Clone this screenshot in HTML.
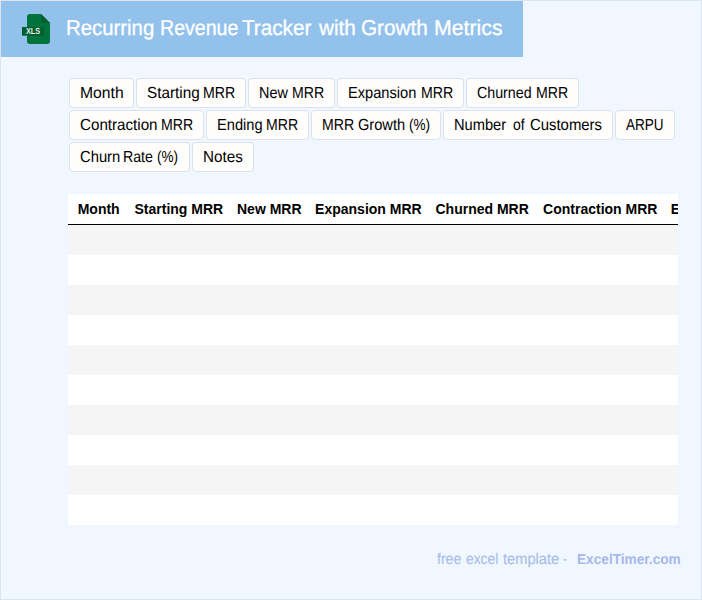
<!DOCTYPE html>
<html lang="en">
<head>
<meta charset="utf-8">
<title>Recurring Revenue Tracker with Growth Metrics</title>
<style>
html,body{margin:0;padding:0;}
body{text-rendering:geometricPrecision;width:702px;height:600px;overflow:hidden;background:#f0f7ff;font-family:"Liberation Sans",sans-serif;position:relative;}
#frame{position:absolute;left:0;top:0;width:700px;height:598px;border:1px solid #dce5ef;}
#hdr{position:absolute;left:1px;top:1px;width:522px;height:56px;background:#92c1ec;}
#icon{position:absolute;left:20px;top:12px;}
.w{position:absolute;white-space:pre;display:block;transform-origin:0 0;}
.tw{color:#fff;-webkit-text-stroke:0.3px #fff;}
.tag{position:absolute;box-sizing:border-box;height:30px;border:1px solid #d9e2ed;border-radius:4px;background:#fffefd;}
.tl .w{color:#000;}
#tbl{position:absolute;left:68px;top:194px;width:610px;height:331px;overflow:hidden;background:#fff;}
#thead{position:absolute;left:0;top:0;width:610px;height:30px;border-bottom:1px solid #000;}
.th{font-weight:bold;color:#000;text-rendering:auto;}
.row{position:absolute;left:0;width:610px;height:30px;background:#f5f5f5;}
.ff{color:#a7beea;-webkit-text-stroke:0.15px #a7beea;}
.fb{color:#a7b8ea;font-weight:bold;}
</style>
</head>
<body>
<div id="frame"></div>
<div id="hdr"></div>
<svg id="icon" width="32" height="34" viewBox="20 12 32 34">
<path d="M30 14h11l9 9v18a3 3 0 0 1-3 3H30a3 3 0 0 1-3-3V17a3 3 0 0 1 3-3z" fill="#00733c"/>
<path d="M41 14l9 9h-9z" fill="#005f30"/>
<rect x="22" y="27" width="22" height="8.7" fill="#005f30"/>
<text x="33.05" y="34.4" font-family="Liberation Sans, sans-serif" font-weight="bold" font-size="8.8" fill="#e3ede6" text-anchor="middle" textLength="14.3" lengthAdjust="spacingAndGlyphs">XLS</text>
</svg>

<div id="title"><span class="w tw" style="left:66.25px;top:14.55px;line-height:26px;font-size:21.5px;transform:scaleX(0.9469);">Recurring</span> <span class="w tw" style="left:159.89px;top:14.55px;line-height:26px;font-size:21.5px;transform:scaleX(0.9108);">Revenue</span> <span class="w tw" style="left:242.30px;top:14.55px;line-height:26px;font-size:21.5px;transform:scaleX(0.9623);">Tracker</span> <span class="w tw" style="left:318.96px;top:14.55px;line-height:26px;font-size:21.5px;transform:scaleX(0.9640);">with</span> <span class="w tw" style="left:361.34px;top:14.55px;line-height:26px;font-size:21.5px;transform:scaleX(0.9638);">Growth</span> <span class="w tw" style="left:433.91px;top:14.55px;line-height:26px;font-size:21.5px;transform:scaleX(0.9907);">Metrics</span></div>
<div class="tag" style="left:69px;top:78px;width:65px"></div>
<div class="tag" style="left:136px;top:78px;width:110px"></div>
<div class="tag" style="left:248px;top:78px;width:87px"></div>
<div class="tag" style="left:337px;top:78px;width:127px"></div>
<div class="tag" style="left:466px;top:78px;width:113px"></div>
<div class="tag" style="left:69px;top:110px;width:135px"></div>
<div class="tag" style="left:206px;top:110px;width:103px"></div>
<div class="tag" style="left:311px;top:110px;width:130px"></div>
<div class="tag" style="left:443px;top:110px;width:170px"></div>
<div class="tag" style="left:615px;top:110px;width:60px"></div>
<div class="tag" style="left:69px;top:142px;width:121px"></div>
<div class="tag" style="left:192px;top:142px;width:62px"></div>
<div class="tl"><span class="w " style="left:79.72px;top:83.96px;line-height:19px;font-size:16px;transform:scaleX(0.9819);">Month</span></div>
<div class="tl"><span class="w " style="left:147.30px;top:83.96px;line-height:19px;font-size:16px;transform:scaleX(0.9550);">Starting</span> <span class="w " style="left:202.82px;top:83.96px;line-height:19px;font-size:16px;transform:scaleX(0.8830);">MRR</span></div>
<div class="tl"><span class="w " style="left:258.80px;top:83.96px;line-height:19px;font-size:16px;transform:scaleX(0.8998);">New</span> <span class="w " style="left:292.12px;top:83.96px;line-height:19px;font-size:16px;transform:scaleX(0.8830);">MRR</span></div>
<div class="tl"><span class="w " style="left:348.09px;top:83.96px;line-height:19px;font-size:16px;transform:scaleX(0.9146);">Expansion</span> <span class="w " style="left:420.62px;top:83.96px;line-height:19px;font-size:16px;transform:scaleX(0.8830);">MRR</span></div>
<div class="tl"><span class="w " style="left:477.20px;top:83.96px;line-height:19px;font-size:16px;transform:scaleX(0.8896);">Churned</span> <span class="w " style="left:536.02px;top:83.96px;line-height:19px;font-size:16px;transform:scaleX(0.8830);">MRR</span></div>
<div class="tl"><span class="w " style="left:80.40px;top:115.96px;line-height:19px;font-size:16px;transform:scaleX(0.9478);">Contraction</span> <span class="w " style="left:161.32px;top:115.96px;line-height:19px;font-size:16px;transform:scaleX(0.8830);">MRR</span></div>
<div class="tl"><span class="w " style="left:216.79px;top:115.96px;line-height:19px;font-size:16px;transform:scaleX(0.9140);">Ending</span> <span class="w " style="left:265.82px;top:115.96px;line-height:19px;font-size:16px;transform:scaleX(0.8801);">MRR</span></div>
<div class="tl"><span class="w " style="left:321.72px;top:115.96px;line-height:19px;font-size:16px;transform:scaleX(0.8801);">MRR</span> <span class="w " style="left:358.10px;top:115.96px;line-height:19px;font-size:16px;transform:scaleX(0.9137);">Growth</span> <span class="w " style="left:408.85px;top:115.96px;line-height:19px;font-size:16px;transform:scaleX(0.8491);">(%)</span></div>
<div class="tl"><span class="w " style="left:454.18px;top:115.96px;line-height:19px;font-size:16px;transform:scaleX(0.9155);">Number</span> <span class="w " style="left:512.80px;top:115.96px;line-height:19px;font-size:16px;transform:scaleX(0.8706);">of</span> <span class="w " style="left:529.50px;top:115.96px;line-height:19px;font-size:16px;transform:scaleX(0.9308);">Customers</span></div>
<div class="tl"><span class="w " style="left:626.20px;top:115.96px;line-height:19px;font-size:16px;transform:scaleX(0.8451);">ARPU</span></div>
<div class="tl"><span class="w " style="left:80.20px;top:147.96px;line-height:19px;font-size:16px;transform:scaleX(0.9232);">Churn</span> <span class="w " style="left:123.22px;top:147.96px;line-height:19px;font-size:16px;transform:scaleX(0.8845);">Rate</span> <span class="w " style="left:157.46px;top:147.96px;line-height:19px;font-size:16px;transform:scaleX(0.8448);">(%)</span></div>
<div class="tl"><span class="w " style="left:202.65px;top:147.96px;line-height:19px;font-size:16px;transform:scaleX(0.9511);">Notes</span></div>
<div id="tbl"><div id="thead"><span class="w th" style="left:9.7px;top:6.65px;line-height:17px;font-size:14px;">Month</span> <span class="w th" style="left:66.5px;top:6.65px;line-height:17px;font-size:14px;">Starting MRR</span> <span class="w th" style="left:169.0px;top:6.65px;line-height:17px;font-size:14px;">New MRR</span> <span class="w th" style="left:247.1px;top:6.65px;line-height:17px;font-size:14px;">Expansion MRR</span> <span class="w th" style="left:367.5px;top:6.65px;line-height:17px;font-size:14px;">Churned MRR</span> <span class="w th" style="left:475.1px;top:6.65px;line-height:17px;font-size:14px;">Contraction MRR</span> <span class="w th" style="left:602.8px;top:6.65px;line-height:17px;font-size:14px;">Ending MRR</span></div>
<div class="row" style="top:31px"></div>
<div class="row" style="top:91px"></div>
<div class="row" style="top:151px"></div>
<div class="row" style="top:211px"></div>
<div class="row" style="top:271px"></div></div>
<div id="foot"><span class="w ff" style="left:437.40px;top:550.13px;line-height:19px;font-size:15.5px;transform:scaleX(0.9085);">free</span> <span class="w ff" style="left:465.70px;top:550.13px;line-height:19px;font-size:15.5px;transform:scaleX(0.8925);">excel</span> <span class="w ff" style="left:502.60px;top:550.13px;line-height:19px;font-size:15.5px;transform:scaleX(0.9434);">template</span> <span class="w ff" style="left:562.80px;top:550.13px;line-height:19px;font-size:15.5px;transform:scaleX(0.7400);">-</span> <span class="w fb" style="left:577.30px;top:552.48px;line-height:17px;font-size:14.5px;transform:scaleX(0.9417);">ExcelTimer.com</span></div>
</body>
</html>
